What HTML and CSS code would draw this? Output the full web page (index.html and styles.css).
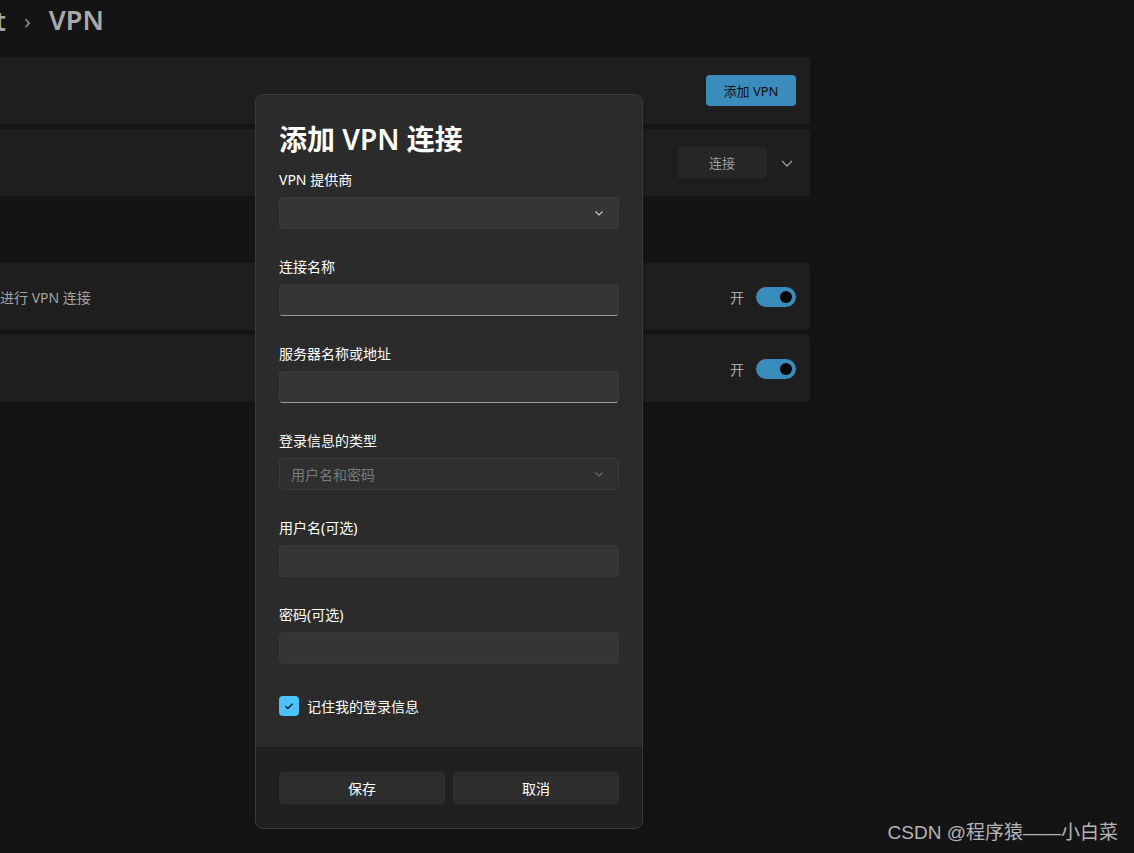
FILE: index.html
```html
<!DOCTYPE html>
<html lang="zh-CN">
<head>
    <meta charset="UTF-8">
    <meta name="viewport" content="width=device-width, initial-scale=1.0">
    <title>VPN</title>
    <link rel="stylesheet" href="styles.css">
</head>
<body>

    <!-- Settings page (dimmed behind the dialog) -->
    <div class="page">
        <div class="breadcrumb">
            <span class="crumb-parent">网络和 Internet</span>
            <span class="crumb-sep">›</span>
            <span class="crumb-current">VPN</span>
        </div>

        <div class="card">
            <span class="card-text"></span>
            <button class="accent-btn">添加 VPN</button>
        </div>

        <div class="card">
            <span class="card-text"></span>
            <div class="card-actions">
                <button class="plain-btn">连接</button>
                <svg class="chevron" width="14" height="14" viewBox="0 0 14 14">
                    <path d="M2 5l5 5 5-5" fill="none" stroke="#9a9a9a" stroke-width="1.3"/>
                </svg>
            </div>
        </div>

        <div class="section-gap"></div>

        <div class="card">
            <span class="card-text">允许通过按流量计费的网络进行 VPN 连接</span>
            <div class="toggle-wrap">
                <span class="toggle-label">开</span>
                <span class="toggle"><span class="knob"></span></span>
            </div>
        </div>

        <div class="card">
            <span class="card-text"></span>
            <div class="toggle-wrap">
                <span class="toggle-label">开</span>
                <span class="toggle"><span class="knob"></span></span>
            </div>
        </div>
    </div>

    <!-- Add VPN dialog -->
    <div class="dialog">
        <div class="dialog-body">
            <h2>添加 VPN 连接</h2>

            <div class="field">
                <label>VPN 提供商</label>
                <div class="select">
                    <span></span>
                    <svg width="12" height="12" viewBox="0 0 12 12"><path d="M2.5 4.5l3.5 3.5 3.5-3.5" fill="none" stroke="#c8c8c8" stroke-width="1.1"/></svg>
                </div>
            </div>

            <div class="field">
                <label>连接名称</label>
                <input type="text" class="text-input">
            </div>

            <div class="field">
                <label>服务器名称或地址</label>
                <input type="text" class="text-input">
            </div>

            <div class="field">
                <label>登录信息的类型</label>
                <div class="select disabled">
                    <span>用户名和密码</span>
                    <svg width="12" height="12" viewBox="0 0 12 12"><path d="M2.5 4.5l3.5 3.5 3.5-3.5" fill="none" stroke="#6a6a6a" stroke-width="1.1"/></svg>
                </div>
            </div>

            <div class="field">
                <label>用户名(可选)</label>
                <input type="text" class="text-input flat">
            </div>

            <div class="field">
                <label>密码(可选)</label>
                <input type="password" class="text-input flat">
            </div>

            <div class="check-row">
                <span class="checkbox">
                    <svg width="12" height="12" viewBox="0 0 12 12"><path d="M2.5 6.2l2.3 2.3 4.8-4.8" fill="none" stroke="#111" stroke-width="1.3"/></svg>
                </span>
                <span>记住我的登录信息</span>
            </div>
        </div>

        <div class="dialog-footer">
            <button class="dialog-btn">保存</button>
            <button class="dialog-btn">取消</button>
        </div>
    </div>

    <div class="watermark">CSDN @程序猿——小白菜</div>

</body>
</html>
```

FILE: styles.css
```css
/* Common Styles */
* {
    margin: 0;
    padding: 0;
    box-sizing: border-box;
    font-family: "Segoe UI", "Noto Sans", "Noto Sans CJK SC", sans-serif;
}

body {
    width: 1134px;
    height: 853px;
    background-color: #141414;
    overflow: hidden;
    position: relative;
    color: #a8a8a8;
}

/* Page behind the dialog */
.page {
    margin-left: -200px;
    width: 1010px;
}

.breadcrumb {
    display: flex;
    align-items: center;
    height: 39px;
    font-size: 27px;
    font-weight: 600;
    color: #a9a9a9;
    margin-bottom: 18px;
}

.crumb-parent {
    width: 206px;
    text-align: right;
    white-space: nowrap;
}

.crumb-sep {
    font-size: 22px;
    font-weight: 400;
    margin: 0 18px 0 18px;
    color: #8c8c8c;
}

.card {
    height: 67px;
    background-color: #1e1e1e;
    border-radius: 0 4px 4px 0;
    margin-bottom: 5px;
    display: flex;
    align-items: center;
    justify-content: space-between;
    padding: 0 14px 0 32px;
    font-size: 14px;
}

.card-text {
    color: #a3a3a3;
    white-space: nowrap;
}

.accent-btn {
    width: 90px;
    height: 31px;
    border: none;
    border-radius: 4px;
    background-color: #3a8cbc;
    color: #101010;
    font-size: 13px;
}

.card-actions {
    display: flex;
    align-items: center;
    gap: 13px;
}

.plain-btn {
    width: 90px;
    height: 32px;
    border: none;
    border-radius: 4px;
    background-color: #262626;
    color: #a0a0a0;
    font-size: 13px;
}

.chevron {
    margin-right: 2px;
}

.section-gap {
    height: 62px;
}

.toggle-wrap {
    display: flex;
    align-items: center;
    gap: 12px;
}

.toggle-label {
    font-size: 14px;
    color: #a8a8a8;
}

.toggle {
    width: 40px;
    height: 20px;
    border-radius: 10px;
    background-color: #3a8cbc;
    display: flex;
    align-items: center;
    justify-content: flex-end;
    padding-right: 4px;
}

.knob {
    width: 12px;
    height: 12px;
    border-radius: 50%;
    background-color: #050505;
}

/* Dialog */
.dialog {
    position: absolute;
    left: 255px;
    top: 94px;
    width: 388px;
    height: 735px;
    border: 1px solid #3b3b3b;
    border-radius: 8px;
    background-color: #2b2b2b;
    overflow: hidden;
    display: flex;
    flex-direction: column;
}

.dialog-body {
    flex: 1;
    padding: 22px 23px 0 23px;
}

.dialog-body h2 {
    font-size: 28px;
    font-weight: 600;
    line-height: 44px;
    color: #ffffff;
    margin-bottom: 9px;
}

.field {
    margin-bottom: 28px;
}

.field label {
    display: block;
    font-size: 14px;
    line-height: 20px;
    color: #ffffff;
    margin-bottom: 7px;
}

.select {
    height: 32px;
    background-color: #353535;
    border: 1px solid #3a3a3a;
    border-radius: 4px;
    display: flex;
    align-items: center;
    justify-content: space-between;
    padding: 0 13px 0 11px;
    font-size: 14px;
}

.select.disabled {
    background-color: #2f2f2f;
    color: #7a7a7a;
}

.text-input {
    display: block;
    width: 100%;
    height: 32px;
    background-color: #353535;
    border: 1px solid #3a3a3a;
    border-bottom: 1px solid #9a9a9a;
    border-radius: 4px;
    outline: none;
}

.text-input.flat {
    border-bottom: 1px solid #3a3a3a;
}

.check-row {
    display: flex;
    align-items: center;
    gap: 8px;
    font-size: 14px;
    color: #ffffff;
    margin-top: 32px;
}

.checkbox {
    width: 20px;
    height: 20px;
    border-radius: 4px;
    background-color: #4cc2ff;
    display: flex;
    align-items: center;
    justify-content: center;
}

.dialog-footer {
    height: 81px;
    background-color: #202020;
    display: flex;
    gap: 8px;
    padding: 25px 23px 0 23px;
}

.dialog-btn {
    flex: 1;
    height: 32px;
    border: 1px solid #303030;
    border-radius: 4px;
    background-color: #2d2d2d;
    color: #ffffff;
    font-size: 14px;
}

.watermark {
    position: absolute;
    right: 16px;
    bottom: 9px;
    font-family: "Liberation Sans", "Noto Sans CJK SC", sans-serif;
    font-size: 19px;
    color: #b4b4b4;
}
```
